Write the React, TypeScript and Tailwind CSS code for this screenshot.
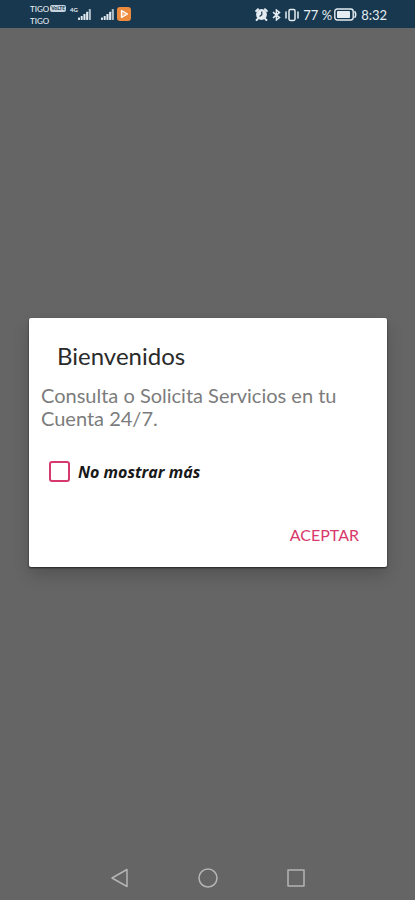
function SignalIcon() {
  return (
    <svg width="13" height="11" viewBox="0 0 13 11" fill="#dfe8ee" aria-hidden="true">
      <rect x="0" y="8.5" width="2" height="2.5" rx="0.4" />
      <rect x="2.7" y="7" width="2" height="4" rx="0.4" />
      <rect x="5.4" y="5" width="2.1" height="6" rx="0.4" />
      <rect x="8.1" y="2.8" width="2.1" height="8.2" rx="0.4" />
      <rect x="10.8" y="0" width="2.1" height="11" rx="0.4" opacity="0.75" />
    </svg>
  );
}

function StatusBar() {
  return (
    <header className="flex h-7 shrink-0 items-center justify-between bg-[#17384f] pl-[30px] pr-7 text-[#e6edf2]">
      <div className="flex items-center">
        <div className="flex w-10 flex-col pt-px text-[8px] leading-3 font-medium">
          <div className="flex items-center gap-px">
            <span>TIGO</span>
            <span className="rounded-xs bg-[#c5d3de] px-px text-[5px] leading-[7px] font-bold text-[#17384f]">
              VoLTE
            </span>
          </div>
          <span>TIGO</span>
        </div>
        <span className="w-2 self-start pt-1 text-[6px] leading-2 font-bold">4G</span>
        <SignalIcon />
        <span className="w-2.5" />
        <SignalIcon />
        <svg className="ml-[3px]" width="14" height="14" viewBox="0 0 14 14" aria-hidden="true">
          <rect width="14" height="14" rx="3" fill="#ee8a3c" />
          <path d="M4.5 3.5 L10.5 7 L4.5 10.5 Z" fill="#f7b27c" stroke="#fff" strokeWidth="1.3" strokeLinejoin="round" />
        </svg>
      </div>
      <div className="flex items-center pt-px">
        <svg width="13" height="13" viewBox="0 0 13 13" aria-hidden="true">
          <path d="M1.2 3 L3 1.2 M11.8 3 L10 1.2 M3 10.6 L1.6 12 M10 10.6 L11.4 12" stroke="#e6edf2" strokeWidth="2" strokeLinecap="round" />
          <circle cx="6.5" cy="6.5" r="5.4" fill="#e6edf2" />
          <path d="M6.8 3.6 V6.8 L4.6 8.4" fill="none" stroke="#17384f" strokeWidth="1.2" />
        </svg>
        <svg className="ml-1" width="9" height="12" viewBox="0 0 9 12" fill="none" stroke="#e6edf2" strokeWidth="1.5" aria-hidden="true">
          <path d="M1 3.2 L7.5 8.6 L4.4 11 V1 L7.5 3.4 L1 8.8" />
        </svg>
        <svg className="ml-1" width="14" height="14" viewBox="0 0 14 14" fill="none" stroke="#e6edf2" strokeWidth="1.5" strokeLinecap="round" aria-hidden="true">
          <rect x="4" y="1.5" width="6" height="11" rx="1.4" />
          <path d="M1 4 V10 M13 4 V10" />
        </svg>
        <span className="ml-1 text-[13px] leading-4">77 %</span>
        <svg className="ml-0.5" width="23" height="13" viewBox="0 0 23 13" aria-hidden="true">
          <rect x="0.8" y="1" width="18.4" height="11" rx="2.4" fill="none" stroke="#e6edf2" strokeWidth="1.4" />
          <rect x="3" y="3" width="13" height="7" rx="0.8" fill="#e6edf2" />
          <path d="M21 3.8 Q22.4 6.5 21 9.2" fill="none" stroke="#e6edf2" strokeWidth="1.6" strokeLinecap="round" />
        </svg>
        <span className="ml-1 text-[13px] leading-4">8:32</span>
      </div>
    </header>
  );
}

function WelcomeDialog() {
  return (
    <section
      role="dialog"
      aria-labelledby="dialog-title"
      className="w-full rounded-xs bg-white px-3 pt-6 pb-3.5 shadow-[0_1px_2px_rgba(0,0,0,0.6),0_8px_16px_rgba(0,0,0,0.18)]"
    >
      <h1 id="dialog-title" className="pl-4 text-2xl leading-7 text-[#2a2a2a]">
        Bienvenidos
      </h1>
      <p className="mt-3.5 text-xl leading-[23px] text-[#7c7c7c]">
        Consulta o Solicita Servicios en tu Cuenta 24/7.
      </p>
      <label className="mt-[30px] flex items-center gap-2 pl-2 font-['Open_Sans',sans-serif] text-base leading-6 font-bold text-[#181818] italic">
        <input
          type="checkbox"
          className="size-[21px] shrink-0 appearance-none rounded-[3px] border-2 border-[#d63a6c] bg-white checked:bg-[#d63a6c]"
        />
        No mostrar más
      </label>
      <div className="mt-[33px] flex justify-end pr-2">
        <button type="button" className="h-9 px-2 text-base text-[#d8386b]">
          ACEPTAR
        </button>
      </div>
    </section>
  );
}

function NavigationBar() {
  return (
    <nav className="flex h-11 shrink-0 items-center justify-center gap-16">
      <button type="button" aria-label="Atrás" className="flex size-6 items-center justify-center">
        <svg width="20" height="20" viewBox="0 0 20 20" fill="none" stroke="#b4b4b4" strokeWidth="1.5" strokeLinejoin="round">
          <path d="M17 1.5 V18.5 L2 10 Z" />
        </svg>
      </button>
      <button type="button" aria-label="Inicio" className="flex size-6 items-center justify-center">
        <svg width="20" height="20" viewBox="0 0 20 20" fill="none" stroke="#b4b4b4" strokeWidth="1.5">
          <circle cx="10" cy="10" r="9" />
        </svg>
      </button>
      <button type="button" aria-label="Recientes" className="flex size-6 items-center justify-center">
        <svg width="20" height="20" viewBox="0 0 20 20" fill="none" stroke="#b4b4b4" strokeWidth="1.5" strokeLinejoin="round">
          <rect x="2" y="2" width="16" height="16" />
        </svg>
      </button>
    </nav>
  );
}

export default function App() {
  return (
    <div className="flex min-h-screen flex-col bg-[#656565] font-[Lato,sans-serif]">
      <StatusBar />
      <main className="flex flex-1 items-center pr-7 pl-[29px]">
        <WelcomeDialog />
      </main>
      <NavigationBar />
    </div>
  );
}
